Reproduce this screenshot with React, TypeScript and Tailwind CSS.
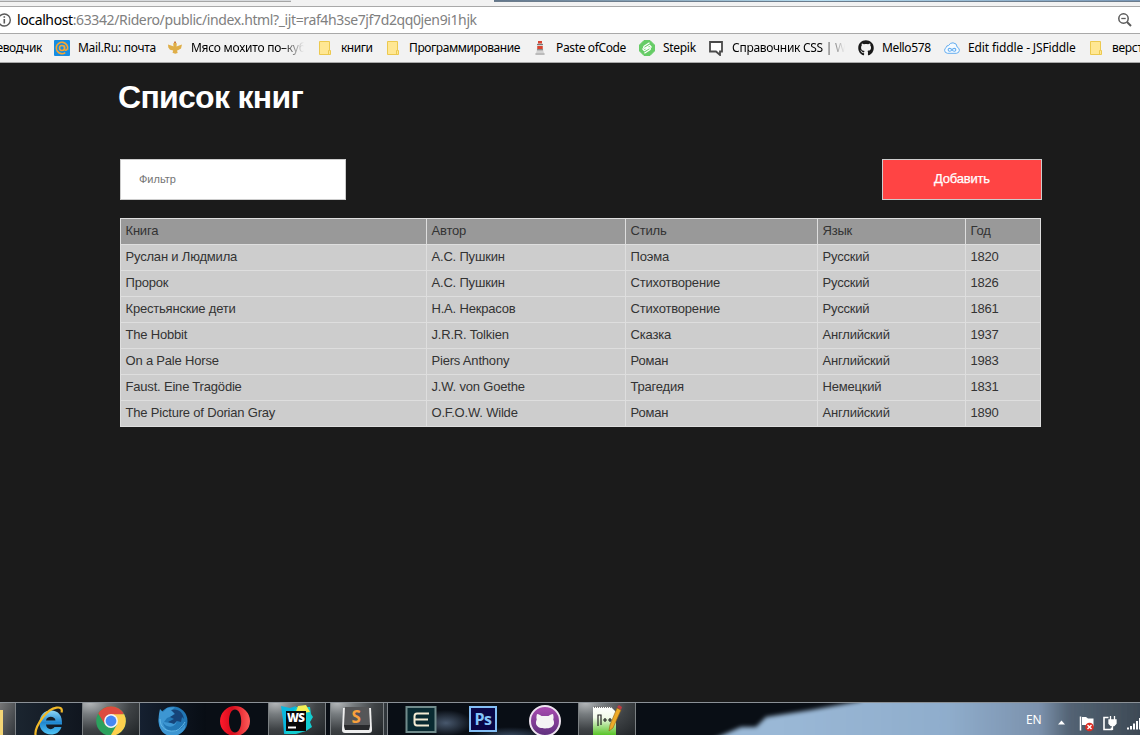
import React from "react";
import { FaGithub } from "react-icons/fa";

const Folder = () => (
  <svg width="16" height="16" viewBox="0 0 16 16">
    <path d="M2.5 1.5h10v9h1v4h-11z" fill="#ffe793" stroke="#ecc94f" />
    <path d="M11.500 14V10.500h1" fill="none" stroke="#ecc94f" />
  </svg>
);

const MailRu = () => (
  <svg width="16" height="16" viewBox="0 0 16 16">
    <rect width="16" height="16" rx="1" fill="#168de2" />
    <circle cx="8" cy="8" r="5.7" fill="none" stroke="#faa62e" strokeWidth="1.6" strokeDasharray="31 5" transform="rotate(55 8 8)" />
    <circle cx="8" cy="8" r="2.5" fill="none" stroke="#faa62e" strokeWidth="1.5" />
    <path d="M10.6 5.5v4q1.3 1.8 2.8-.5" fill="none" stroke="#faa62e" strokeWidth="1.4" />
  </svg>
);

const Bird = () => (
  <svg width="16" height="16" viewBox="0 0 16 16">
    <path d="M1 4.5 5.500 6 6.500 6.500 6.200 3.500 8 2l1.800 1.500L9.500 6.500l2-.7L15 4.500 14 8.500l-3 1.800-1 .2.7 2.500-2.500.8-2.700-1 .7-2.200L3 9.800 1.300 7.500z" fill="#dfae48" />
    <path d="M7.3 1.5h1.5v1.500H7.3z" fill="#c4612f" />
  </svg>
);

const Lighthouse = () => (
  <svg width="16" height="16" viewBox="0 0 16 16">
    <path d="M5.5 3h5l.8 8 1.2 3.5h-9L4.7 11z" fill="#d3d3d3" />
    <path d="M6 1h4v2.5H6zM5.3 6h5.4v3H5.3z" fill="#d9432f" />
    <path d="M5 4h6v1H5zM5 9.2h6v1H5z" fill="#777" />
    <path d="M3.5 13h9v2h-9z" fill="#bbb" />
  </svg>
);

const StepikIcon = () => (
  <svg width="16" height="16" viewBox="0 0 16 16">
    <path d="M5 .5h6L15.500 5v6L11 15.500H5L.5 11V5z" fill="#66cc66" stroke="#66cc66" strokeLinejoin="round" />
    <path d="M10.5 2.8 5.1 6.3q-1.2 1.3.3 2l4.9-.7q1.8.8.5 2.2l-5.4 3.5M3.5 8.5l1.8 2.2 5-3M12.5 7.5l-1.8-2.2-5 3" fill="none" stroke="#fff" strokeWidth="1.2" />
  </svg>
);

const Speech = () => (
  <svg width="16" height="16" viewBox="0 0 16 16">
    <path d="M2 2h12v9.500h-2V15l-4-3.500H2z" fill="#fff" stroke="#4a4a4a" strokeWidth="1.8" />
  </svg>
);

const Fiddle = () => (
  <svg width="16" height="16" viewBox="0 0 16 16">
    <path d="M3.5 13.3Q.6 13 .6 10.3.6 8.2 2.3 7.4 2.4 5.3 4.6 5.5 6 2.7 9 2.8q4 .3 4.2 4.3 2.2 1 2.2 3.2-.2 2.7-3 3z" fill="#f4faff" stroke="#64adf0" />
    <path d="M8 9.7C6.8 8 4.2 7.8 4.2 9.8S6.8 11.5 8 9.7s3.8-1.9 3.8.1S9.2 11.5 8 9.7z" fill="none" stroke="#64adf0" strokeWidth="1.1" />
  </svg>
);

const bookmarks = [
  { cell: "w-[113px]", icon: <MailRu />, label: "Mail.Ru: почта", text: "tracking-[-0.28px]", fade: false },
  { cell: "w-[150px]", icon: <Bird />, label: "Мясо мохито по–куб", text: "w-[113px] tracking-[-0.26px]", fade: true },
  { cell: "w-[68px]", icon: <Folder />, label: "книги", text: "tracking-[-0.5px]", fade: false },
  { cell: "w-[147px]", icon: <Folder />, label: "Программирование", text: "tracking-[-0.42px]", fade: false },
  { cell: "w-[107px]", icon: <Lighthouse />, label: "Paste ofCode", text: "tracking-[-0.36px]", fade: false },
  { cell: "w-[69px]", icon: <StepikIcon />, label: "Stepik", text: "tracking-[-0.3px]", fade: false },
  { cell: "w-[150px]", icon: <Speech />, label: "Справочник CSS | We", text: "w-[113px] tracking-[-0.28px]", fade: true },
  { cell: "w-[86px]", icon: <FaGithub size={16} color="#191919" />, label: "Mello578", text: "tracking-[-0.38px]", fade: false },
  { cell: "w-[144px]", icon: <Fiddle />, label: "Edit fiddle - JSFiddle", text: "tracking-[-0.12px]", fade: false },
  { cell: "w-[60px]", icon: <Folder />, label: "верстка", text: "tracking-[-0.3px]", fade: false },
];

function BrowserChrome() {
  return (
    <header className="h-[63px] shrink-0 font-['Noto_Sans',sans-serif]">
      <div className="flex h-[6px] bg-[#f2f2f2]">
        <div className="h-[2px] w-[291px] border-b border-[#a5a5a5] bg-[#d8dbde]" />
        <div className="h-[2px] w-[203px]" />
        <div className="h-[2px] flex-1 border-b border-[#6c7c8c] bg-linear-to-r from-[#61758a] via-[#b8dff2] to-[#7896b5]" />
      </div>
      <div className="flex h-[28px] items-center border-y border-[#a9a9a9] bg-white">
        <svg width="17" height="16" viewBox="0 0 17 16" className="shrink-0">
          <circle cx="4.3" cy="8" r="6" fill="none" stroke="#5a5a5a" strokeWidth="1.4" />
          <path d="M4.3 4.2v1.6M4.3 7v4.6" stroke="#5a5a5a" strokeWidth="1.6" />
        </svg>
        <span className="text-[14px] leading-[20px] tracking-[-0.38px] whitespace-nowrap text-[#808080]">
          <span className="text-black">localhost</span>:63342/Ridero/public/index.html?_ijt=raf4h3se7jf7d2qq0jen9i1hjk
        </span>
        <svg width="16" height="16" viewBox="0 0 16 16" className="mr-[7px] ml-auto" fill="none" stroke="#5a5a5a">
          <circle cx="6.5" cy="6.5" r="4.7" strokeWidth="1.5" />
          <path d="M4.3 6.5h4.4" strokeWidth="1.3" />
          <path d="m10 10 4 4" strokeWidth="2" />
        </svg>
      </div>
      <nav className="flex h-[29px] items-center overflow-hidden border-b border-[#a9a9a9] bg-[#f2f2f2] text-[12px] leading-[18px] whitespace-nowrap text-black">
        <div className="flex w-[54px] shrink-0">
          <div className="flex w-[42px] justify-end overflow-hidden tracking-[-0.38px]">Переводчик</div>
        </div>
        {bookmarks.map((b, i) => (
          <div key={i} className={`flex shrink-0 items-center gap-2 ${b.cell}`}>
            <span className="size-4 shrink-0">{b.icon}</span>
            <span className={`${b.text} ${b.fade ? "overflow-hidden mask-r-from-80%" : ""}`}>{b.label}</span>
          </div>
        ))}
      </nav>
    </header>
  );
}

const books = [
  ["Руслан и Людмила", "А.С. Пушкин", "Поэма", "Русский", "1820"],
  ["Пророк", "А.С. Пушкин", "Стихотворение", "Русский", "1826"],
  ["Крестьянские дети", "Н.А. Некрасов", "Стихотворение", "Русский", "1861"],
  ["The Hobbit", "J.R.R. Tolkien", "Сказка", "Английский", "1937"],
  ["On a Pale Horse", "Piers Anthony", "Роман", "Английский", "1983"],
  ["Faust. Eine Tragödie", "J.W. von Goethe", "Трагедия", "Немецкий", "1831"],
  ["The Picture of Dorian Gray", "O.F.O.W. Wilde", "Роман", "Английский", "1890"],
];

function BookPage() {
  return (
    <main className="flex-1 bg-[#1b1b1b] pt-4 pr-[98px] pl-[118px] font-['Liberation_Sans',Arial,sans-serif]">
      <h1 className="text-[32px] leading-[37px] font-bold tracking-[-0.7px] whitespace-nowrap text-white">Список книг</h1>
      <div className="mt-[43px] ml-[2px] flex justify-between">
        <input
          placeholder="Фильтр"
          className="h-[41px] w-[226px] border border-[#ccc] bg-white px-[18px] pb-[2px] text-[11px] placeholder:text-[#757575] placeholder:opacity-100"
        />
        <button className="h-[41px] w-[160px] border border-[#ccc] bg-[#ff4444] pb-[2px] text-[13px] tracking-[-0.2px] text-white [-webkit-text-stroke:0.25px_white]">
          Добавить
        </button>
      </div>
      <table className="mt-[18px] ml-[2px] w-[921px] table-fixed border-separate border-spacing-0 border-t border-l border-[#dedede] text-[13px] leading-[15px] tracking-[-0.19px] text-[#333]">
        <colgroup>
          <col className="w-[306px]" />
          <col className="w-[199px]" />
          <col className="w-[192px]" />
          <col className="w-[148px]" />
          <col className="w-[75px]" />
        </colgroup>
        <thead>
          <tr className="h-[26px] bg-[#999]">
            {["Книга", "Автор", "Стиль", "Язык", "Год"].map((h) => (
              <th key={h} className="border-r border-b border-[#dedede] p-0 pb-[2px] pl-[4.5px] text-left font-normal">{h}</th>
            ))}
          </tr>
        </thead>
        <tbody>
          {books.map((row, i) => (
            <tr key={i} className="h-[26px] bg-[#cdcdcd]">
              {row.map((c, j) => (
                <td key={j} className="border-r border-b border-[#dedede] p-0 pb-[2px] pl-[4.5px]">{c}</td>
              ))}
            </tr>
          ))}
        </tbody>
      </table>
    </main>
  );
}

const active =
  "border-x border-[#7b8083] bg-[radial-gradient(ellipse_at_12%_0%,#b4b7b9_0%,#777c7f_25%,#3f4346_58%,#202427_100%)]";

function Wallpaper() {
  return (
    <svg width="504" height="32" viewBox="0 0 504 32" className="absolute inset-0">
      <defs>
        <linearGradient id="sky">
          <stop offset=".15" stopColor="#9ab8d6" />
          <stop offset=".5" stopColor="#8fadcc" />
          <stop offset=".69" stopColor="#7b91ac" />
          <stop offset=".75" stopColor="#536374" />
          <stop offset=".9" stopColor="#3d4954" />
          <stop offset="1" stopColor="#29333c" />
        </linearGradient>
        <filter id="soft" x="-5%" y="-40%" width="110%" height="180%">
          <feGaussianBlur stdDeviation="2.2" />
        </filter>
      </defs>
      <path d="M68 40 105 24l15 0 10-10 45-7 50-9 0-10h330v62z" fill="url(#sky)" filter="url(#soft)" />
    </svg>
  );
}

function Taskbar() {
  return (
    <footer className="flex h-[33px] shrink-0 overflow-hidden border-t border-t-[#8b9197] bg-[#090e15]">
      <div className="flex w-[16px] shrink-0 border-r border-[#7a7f83] bg-linear-to-br from-[#777] to-[#33383d] pt-[7px]">
        <div className="h-[25px] w-[3px] bg-[#f3d576]" />
      </div>
      <div className="flex w-[66px] shrink-0 justify-center bg-linear-to-r from-[#1b2530] to-[#10161f] pt-[2px]">
        <svg width="34" height="34" viewBox="0 0 34 34">
          <defs>
            <linearGradient id="ie" x1="0" y1="0" x2="0" y2="1">
              <stop offset="0" stopColor="#8ed8fa" />
              <stop offset=".5" stopColor="#2087d0" />
              <stop offset="1" stopColor="#52c5f5" />
            </linearGradient>
          </defs>
          <path d="M30 19.500H14c.3 5.300 6.500 6 8.500 2.500h7c-1.500 5-5.500 7.500-10.500 7.500C12 29.500 7.500 24.500 7.500 17.800 7.500 10 12.500 5.500 19 5.500 26.500 5.500 30.500 10.500 30 19.500zM14 15.500h9.500c-.4-4.700-8.800-5-9.500 0z" fill="url(#ie)" />
          <path d="M29.500 7.500C32 0 20 .5 11 12 3 23 1.500 29 5 33" fill="none" stroke="#f1b929" strokeWidth="2.2" />
        </svg>
      </div>
      <div className={`flex w-[58px] shrink-0 justify-center pt-[3px] ${active}`}>
        <svg width="30" height="30" viewBox="0 0 30 30">
          <circle cx="15" cy="15" r="14.8" fill="#2ba15d" />
          <path d="M15 15 2.2 7.6A14.8 14.8 0 0 1 27.8 7.600z" fill="#dd4b3e" />
          <path d="M2.2 7.600 9 18.500 15 8.500z" fill="#dd4b3e" />
          <path d="M15 8.300h13.200A14.800 14.800 0 0 1 14.500 29.800L21 18.500z" fill="#fdd04e" />
          <circle cx="15" cy="15" r="6.9" fill="#f4f4f4" />
          <circle cx="15" cy="15" r="5.4" fill="#4688f1" />
        </svg>
      </div>
      <div className="flex w-[66px] shrink-0 justify-center bg-linear-to-r from-[#152030] to-[#080d14] pt-[2px]">
        <svg width="32" height="32" viewBox="0 0 32 32">
          <circle cx="16" cy="16" r="14.5" fill="#2277b5" />
          <path d="M3 4l3 3 4-4 8-1-3 3 4 2-4 4-5 2-3 4 6 1 7-3c-1 9-12 8-14 2 1 11 16 13 22 2 2 6-6 12-13 12C4 31-1 20 3 4z" fill="#3d96d2" />
          <path d="M14 5c7-2 12 2 13 9l-2-2-1 5-4-1-3 3-6-2 6-3-4-2 5-3z" fill="#164479" />
          <path d="M3 14c0 9 7 13 14 12 4 0 8-4 11-9" fill="none" stroke="#64b9e8" />
        </svg>
      </div>
      <div className="flex w-[62px] shrink-0 justify-center pt-[3px] pr-[4px]">
        <svg width="30" height="30" viewBox="0 0 30 30">
          <defs>
            <linearGradient id="op">
              <stop stopColor="#ff1b2d" />
              <stop offset=".4" stopColor="#d60c1c" />
              <stop offset="1" stopColor="#ff5c59" />
            </linearGradient>
          </defs>
          <path fillRule="evenodd" d="M15 0a15 15 0 1 1 0 30a15 15 0 0 1 0-30M15 3.500c-4 0-6 5.500-6 11.500s2 11.500 6 11.500 6.200-5.500 6.200-11.500S19 3.500 15 3.500" fill="url(#op)" />
        </svg>
      </div>
      <div className={`flex w-[58px] shrink-0 justify-center pt-[2px] ${active}`}>
        <svg width="34" height="32" viewBox="0 0 34 32">
          <path d="m1 1 9 2 6-2-3 9-3 18-6 1-1-14z" fill="#08b8df" />
          <path d="m16 2 14 0 1 7 2 3-3 5 2 5-6 4-10 3-11 0 5-18z" fill="#12cdd0" />
          <path d="m18 1 8-1 4 7-15 2z" fill="#f4ef55" />
          <rect x="6" y="6" width="20" height="20" fill="#080808" />
          <path d="M8 22.500h8" stroke="#fff" strokeWidth="2" />
          <text x="7" y="17" fontFamily="Open Sans" fontWeight="800" fontSize="11.5" fill="#fff" textLength="18">WS</text>
        </svg>
      </div>
      <div className="w-[4px] shrink-0" />
      <div className={`flex w-[54px] shrink-0 justify-center pt-[2px] ${active}`}>
        <svg width="32" height="30" viewBox="0 0 32 30">
          <path d="M2 3h28l1 22q0 3-3 3H4q-3 0-3-3z" fill="#eee" />
          <path d="M4 2h24l1 18-1 5H4l-1-5z" fill="#555658" />
          <path d="M3 20h26l-1 5H4z" fill="#28292b" />
          <text x="10.500" y="17.500" fontFamily="Open Sans" fontWeight="700" fontSize="17" fill="#f9a13c">S</text>
        </svg>
      </div>
      <div className="w-[4px] shrink-0 border-r border-[#80858a] bg-[#30363b]" />
      <div className="flex min-w-0 flex-1 bg-[radial-gradient(ellipse_26px_13px_at_58px_20px,#48586d,transparent),radial-gradient(ellipse_40px_10px_at_122px_34px,#3d5068,transparent)]">
        <div className="w-[17px] shrink-0" />
        <svg width="32" height="28" viewBox="0 0 32 28" className="mt-[2px] shrink-0">
          <rect x="1.500" y="2" width="29" height="25" fill="#082a31" stroke="#708b8c" strokeWidth="2" />
          <path d="M24 8.500H12q-2.500 0-2.500 3v6q0 3 2.500 3h12M9 14.500h14" fill="none" stroke="#f2ead2" strokeWidth="2" />
        </svg>
        <div className="mt-[3px] ml-[32px] flex h-[26px] w-[28px] shrink-0 items-center justify-center border-2 border-[#83bef5] bg-[#090747] font-['Open_Sans',sans-serif] text-[16px] leading-none font-bold tracking-[-0.5px] text-[#84c5fb]">
          Ps
        </div>
        <div className="mt-[2px] ml-8 flex size-8 shrink-0 items-center justify-center rounded-full border-2 border-[#eee5f0] bg-linear-to-b from-[#a84bb0] to-[#60317f]">
          <svg width="20" height="20" viewBox="0 0 20 20">
            <path d="M2 3c2 0 3 1 4.500 2h7C15 4 16 3 18 3q1 3 .3 5.500C21 15 16 17.500 10 17.500S-1 15 1.700 8.500Q1 6 2 3" fill="#f4f4f4" />
          </svg>
        </div>
        <div className={`ml-[17px] flex w-[58px] shrink-0 justify-center ${active}`}>
          <svg width="34" height="33" viewBox="0 0 34 33">
            <defs>
              <linearGradient id="np" x1="0" y1="0" x2="0" y2="1">
                <stop stopColor="#fff" />
                <stop offset=".35" stopColor="#f2fae9" />
                <stop offset="1" stopColor="#47be12" />
              </linearGradient>
            </defs>
            <path d="M3 4h18l5 5v25H3z" fill="url(#np)" />
            <path d="M4 4h18" stroke="#777" strokeDasharray="1 1" strokeWidth="2" />
            <path d="M8 23V12h3v10M13 17h4M15 15v4M18 17h4M20 15v4" fill="none" stroke="#222" strokeWidth="1.2" />
            <path d="m27 5 4 2-8 18-4 3 1-6z" fill="#edaa28" stroke="#916116" strokeWidth=".6" />
            <path d="m27 4 2-2 3 2-1 3z" fill="#bf3c42" />
          </svg>
        </div>
        <div className="relative flex min-w-0 flex-1 justify-end">
          <Wallpaper />
          <div className="relative flex shrink-0 items-start text-white">
            <span className="mt-[9px] w-[32px] font-['Noto_Sans',sans-serif] text-[12px] leading-[16px] tracking-[-0.2px]">EN</span>
            <svg width="82" height="24" viewBox="0 0 82 24" className="mt-[9px]">
              <path d="m0 12.500 3.500-4L7 12.500z" fill="#fff" />
              <path d="M22.5 4.500v14" stroke="#fff" strokeWidth="1.5" />
              <path d="M24 5h4l2 1.500h5.500v8h-6l-2-1.500h-3.500z" fill="#fff" />
              <circle cx="31.5" cy="15" r="4.300" fill="#dc2b22" />
              <path d="m29.5 13 4 4m0-4-4 4" stroke="#fff" strokeWidth="1.4" />
              <path d="M50.500 5.500H46v12h7.500v-2" fill="none" stroke="#fff" strokeWidth="1.6" />
              <path d="M51 8h7v3.500l-2 2h-3l-2-2zM52.500 4v4M56.500 4v4M54.500 13v5" fill="#fff" stroke="#fff" strokeWidth="1.3" />
              <path d="M70 15.500v2M73 14v3.500M76 11.500v6M79 9v8.500M82 6v11.500" stroke="#fff" strokeWidth="2" />
            </svg>
          </div>
        </div>
      </div>
    </footer>
  );
}

export default function App() {
  return (
    <div className="flex h-[735px] w-[1140px] flex-col overflow-hidden bg-[#1b1b1b]">
      <BrowserChrome />
      <BookPage />
      <Taskbar />
    </div>
  );
}
